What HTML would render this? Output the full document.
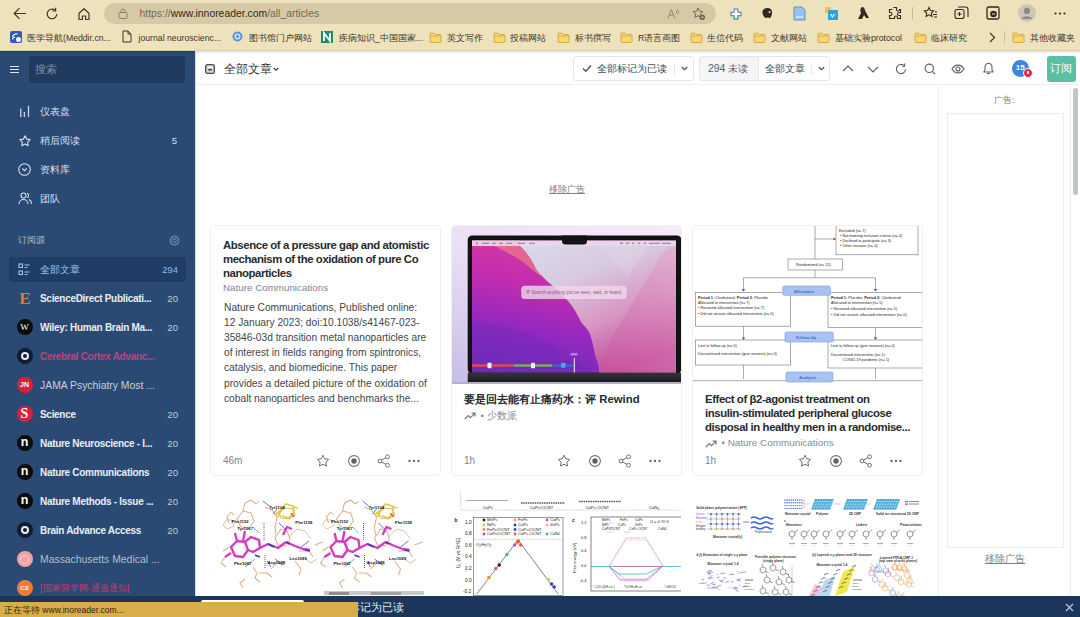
<!DOCTYPE html>
<html><head><meta charset="utf-8">
<style>
*{box-sizing:border-box;margin:0;padding:0}
html,body{width:1080px;height:617px;overflow:hidden;background:#fff;font-family:"Liberation Sans",sans-serif}
.a{position:absolute}
#chrome{left:0;top:0;width:1080px;height:51px;background:#eee2bc}
#addr{left:104px;top:3px;width:612px;height:21px;border-radius:11px;background:#d6c9a6}
.bm{position:absolute;top:32px;height:13px;font-size:8.7px;line-height:13px;color:#3a352a;white-space:nowrap}
.fold{position:absolute;top:32px;width:11px;height:10px;border:1px solid #c9a43c;background:#f6d978;border-radius:1.5px}
.fold:before{content:"";position:absolute;left:-1px;top:-3px;width:5px;height:3px;border:1px solid #c9a43c;border-bottom:none;background:#f6d978;border-radius:1px 1px 0 0}
#side{left:0;top:51px;width:195px;height:545px;background:#2a4a73}
.nav{position:absolute;left:40px;font-size:10px;color:#d6deea;white-space:nowrap;line-height:14px}
.feed{position:absolute;margin-top:0.8px;left:40px;font-size:10px;letter-spacing:-0.3px;color:#e8edf4;font-weight:700;white-space:nowrap;line-height:14px}
.cnt{position:absolute;margin-top:0.8px;right:17px;font-size:9.6px;color:#c3ccd9;line-height:14px}
.fi{position:absolute;left:18px;width:14px;height:14px;border-radius:50%}
#hdr{left:195px;top:51px;width:885px;height:34px;background:#fff;border-bottom:1px solid #eceef1}
.btn{position:absolute;top:56px;height:25px;border:1px solid #e3e6ea;border-radius:3px;background:#fff}
.card{position:absolute;width:231px;height:251px;border:1px solid #eef0f2;border-radius:4px;background:#fff;overflow:hidden}
.ttl{position:absolute;left:12px;font-size:11.4px;font-weight:700;color:#272a30;letter-spacing:-0.42px;line-height:14px}
.src{position:absolute;left:12px;font-size:9.4px;color:#7c8597;line-height:12px;white-space:nowrap}
.body{position:absolute;left:13px;top:74px;width:225px;font-size:10.22px;color:#43464c;line-height:15.2px;white-space:nowrap}
.foot{position:absolute;left:12px;top:229px;font-size:10px;line-height:12px;color:#7d8492}
.ic{position:absolute}
</style></head><body>
<!-- Browser chrome -->
<div id="chrome" class="a">
  <div class="a" style="left:0;top:50px;width:1080px;height:1px;background:#d9cda9"></div>
  <!-- back -->
  <svg class="a" style="left:13px;top:7px" width="14" height="13" viewBox="0 0 14 13"><path d="M13 6.5H1.5M6.5 1.2L1.2 6.5l5.3 5.3" fill="none" stroke="#3b362c" stroke-width="1.2"/></svg>
  <!-- refresh -->
  <svg class="a" style="left:45px;top:7px" width="14" height="14" viewBox="0 0 14 14"><path d="M11.8 7A4.8 4.8 0 1 1 10 3.2" fill="none" stroke="#3b362c" stroke-width="1.2"/><path d="M10.6 0.8v3.2H7.4" fill="none" stroke="#3b362c" stroke-width="1.2"/></svg>
  <!-- home -->
  <svg class="a" style="left:77px;top:7px" width="14" height="14" viewBox="0 0 14 14"><path d="M2 6.2L7 1.8l5 4.4V12.5H8.6V9H5.4v3.5H2z" fill="none" stroke="#3b362c" stroke-width="1.2" stroke-linejoin="round"/></svg>
  <div id="addr" class="a">
    <svg class="a" style="left:14px;top:5px" width="10" height="11" viewBox="0 0 10 11"><rect x="1" y="4.5" width="8" height="6" rx="1" fill="none" stroke="#8b836e" stroke-width="1"/><path d="M3 4.5V3a2 2 0 0 1 4 0v1.5" fill="none" stroke="#8b836e" stroke-width="1"/></svg>
    <div class="a" style="left:35.5px;top:4px;font-size:10.4px;line-height:14px;color:#6f6a5c;white-space:nowrap">https://<span style="color:#2d2a22">www.innoreader.com</span>/all_articles</div>
    <svg class="a" style="left:563px;top:5px" width="13" height="11" viewBox="0 0 13 11"><path d="M1 10.5L4.5 1.5 8 10.5M2.3 7h4.4" fill="none" stroke="#8b836e" stroke-width="0.9"/><path d="M9 2.5q1.5 1.5 0 3M10.5 1.2q2.5 2.8 0 5.6" fill="none" stroke="#8b836e" stroke-width="0.8"/></svg>
    <svg class="a" style="left:588px;top:4px" width="14" height="14" viewBox="0 0 14 14"><path d="M6 1l1.5 3.2 3.4.4-2.5 2.3.6 3.4L6 8.7 3 10.3l.6-3.4L1.1 4.6l3.4-.4z" fill="none" stroke="#6f6856" stroke-width="1"/><circle cx="10.3" cy="10.3" r="2.8" fill="#6f6856"/><path d="M10.3 9v2.6M9 10.3h2.6" stroke="#d6c9a6" stroke-width="0.7"/></svg>
  </div>
  <!-- extension icons -->
  <svg class="a" style="left:730px;top:8px" width="12" height="12" viewBox="0 0 12 12"><path d="M4.2 1h3.6v3.2H11v3.6H7.8V11H4.2V7.8H1V4.2h3.2z" fill="#fff" stroke="#4a7ad8" stroke-width="1.1"/><path d="M4.2 7.8V11h3.6V7.8H11" fill="none" stroke="#4bb58a" stroke-width="1.1"/></svg>
  <svg class="a" style="left:761px;top:7px" width="13" height="13" viewBox="0 0 13 13"><path d="M3 2c2-1.5 6-1.5 7.5 1 1 2 .5 5-.5 7-1 1.5-2.5 1.5-3 0-.5 1-2 1.5-3 .5C2 9 1 6 1.5 4z" fill="#2d2a22"/><circle cx="8.5" cy="5" r="1" fill="#f0e5c6"/></svg>
  <svg class="a" style="left:793px;top:6px" width="13" height="15" viewBox="0 0 13 15"><path d="M1 1h8l3 3v10H1z" fill="#9cc3f0" stroke="#5b95dc" stroke-width="1"/><path d="M3 11h7" stroke="#fff" stroke-width="1"/></svg>
  <svg class="a" style="left:824px;top:6px" width="15" height="15" viewBox="0 0 15 15"><rect x="1" y="1" width="6" height="6" fill="#f2c53d"/><rect x="4" y="4" width="10" height="10" rx="1" fill="#2ba1e8"/><path d="M6.5 8l2 3 2-3" stroke="#fff" stroke-width="1.2" fill="none"/></svg>
  <svg class="a" style="left:857px;top:6px" width="13" height="14" viewBox="0 0 13 14"><path d="M5 1c2 0 3 2 3 3.5L12 12H9l-2-3-2 4H1l3-6C3 5 3 2 5 1z" fill="#2d2a22"/></svg>
  <svg class="a" style="left:888px;top:6px" width="14" height="14" viewBox="0 0 14 14"><path d="M5.5 1.5h3v2a1.5 1.5 0 0 0 3 0h1v3h-1.5a1.5 1.5 0 0 0 0 3H12.5v3h-3v-1a1.5 1.5 0 0 0-3 0v1h-5v-3h1a1.5 1.5 0 0 0 0-3h-1v-3h3" fill="none" stroke="#2d2a22" stroke-width="1.1"/></svg>
  <div class="a" style="left:912px;top:7px;width:1px;height:13px;background:#c9bd9c"></div>
  <svg class="a" style="left:923px;top:6px" width="15" height="14" viewBox="0 0 15 14"><path d="M6 1.5l1.4 3 3.3.4-2.4 2.2.6 3.3L6 8.8 3.1 10.4l.6-3.3L1.3 4.9l3.3-.4z" fill="none" stroke="#2d2a22" stroke-width="1.1"/><path d="M10 8.5h4M11 11h3M12 6h2" stroke="#2d2a22" stroke-width="1.1"/></svg>
  <svg class="a" style="left:954px;top:6px" width="15" height="15" viewBox="0 0 15 15"><rect x="1" y="3.5" width="9" height="9" rx="2" fill="none" stroke="#2d2a22" stroke-width="1.1"/><path d="M4 1h7.5a2.5 2.5 0 0 1 2.5 2.5V11" fill="none" stroke="#2d2a22" stroke-width="1.1"/><path d="M5.5 6v4M3.5 8h4" stroke="#2d2a22" stroke-width="1.1"/></svg>
  <svg class="a" style="left:986px;top:6px" width="14" height="14" viewBox="0 0 14 14"><rect x="1" y="1" width="12" height="12" rx="1.5" fill="none" stroke="#2d2a22" stroke-width="1.3"/><circle cx="7.5" cy="8" r="3.3" fill="#2d2a22"/><path d="M6 8h3" stroke="#f0e5c6" stroke-width="1"/></svg>
  <svg class="a" style="left:1018px;top:4px" width="18" height="18" viewBox="0 0 18 18"><circle cx="9" cy="9" r="9" fill="#cdc6b8"/><circle cx="9" cy="7" r="3.2" fill="#8f8a80"/><path d="M3.5 15a6 4.5 0 0 1 11 0" fill="#8f8a80"/></svg>
  <svg class="a" style="left:1054px;top:12px" width="12" height="3" viewBox="0 0 12 3"><circle cx="1.5" cy="1.5" r="1.1" fill="#2d2a22"/><circle cx="6" cy="1.5" r="1.1" fill="#2d2a22"/><circle cx="10.5" cy="1.5" r="1.1" fill="#2d2a22"/></svg>
  <!-- bookmarks -->
  <svg class="a" style="left:10px;top:31px" width="12" height="12" viewBox="0 0 12 12"><rect width="12" height="12" rx="2" fill="#2d5bb8"/><path d="M2.5 6a4 4 0 0 1 5 -3" stroke="#fff" stroke-width="1.2" fill="none"/><path d="M2.5 8.5a2 2 0 0 1 2.5-2" stroke="#fff" stroke-width="1.2" fill="none"/><circle cx="8.5" cy="8.5" r="2.5" fill="#fff"/></svg>
  <div class="bm" style="left:27px">医学导航(Meddir.cn...</div>
  <svg class="a" style="left:122px;top:30px" width="10" height="13" viewBox="0 0 10 13"><path d="M1 1h5l3 3v8H1z" fill="none" stroke="#3a352a" stroke-width="1"/><path d="M6 1v3h3" fill="none" stroke="#3a352a" stroke-width="1"/></svg>
  <div class="bm" style="left:138.5px">journal neuroscienc...</div>
  <svg class="a" style="left:232px;top:31px" width="11" height="11" viewBox="0 0 11 11"><circle cx="5.5" cy="5.5" r="5" fill="#5b8fe0"/><circle cx="5.5" cy="5.5" r="3" fill="#d9e6fb"/><path d="M5.5 3.5l2 2-2 2-2-2z" fill="#5b8fe0"/></svg>
  <div class="bm" style="left:249px">图书馆门户网站</div>
  <svg class="a" style="left:321px;top:31px" width="12" height="12" viewBox="0 0 12 12"><rect width="12" height="12" fill="#1d8a6b"/><path d="M3 10V2l6 8V2" stroke="#fff" stroke-width="1.8" fill="none"/></svg>
  <div class="bm" style="left:339px">疾病知识_中国国家...</div>
  <svg class="a" style="left:429.0px;top:31.5px" width="13" height="11" viewBox="0 0 13 11"><path d="M1 2.2a1 1 0 0 1 1-1h3l1.3 1.3H11a1 1 0 0 1 1 1V9.5a1 1 0 0 1-1 1H2a1 1 0 0 1-1-1z" fill="#f7d672" stroke="#d0a63a" stroke-width="0.9"/><path d="M1 4h11" stroke="#d0a63a" stroke-width="0.7"/></svg><div class="bm" style="left:447px">英文写作</div>
  <svg class="a" style="left:493.0px;top:31.5px" width="13" height="11" viewBox="0 0 13 11"><path d="M1 2.2a1 1 0 0 1 1-1h3l1.3 1.3H11a1 1 0 0 1 1 1V9.5a1 1 0 0 1-1 1H2a1 1 0 0 1-1-1z" fill="#f7d672" stroke="#d0a63a" stroke-width="0.9"/><path d="M1 4h11" stroke="#d0a63a" stroke-width="0.7"/></svg><div class="bm" style="left:510px">投稿网站</div>
  <svg class="a" style="left:557.0px;top:31.5px" width="13" height="11" viewBox="0 0 13 11"><path d="M1 2.2a1 1 0 0 1 1-1h3l1.3 1.3H11a1 1 0 0 1 1 1V9.5a1 1 0 0 1-1 1H2a1 1 0 0 1-1-1z" fill="#f7d672" stroke="#d0a63a" stroke-width="0.9"/><path d="M1 4h11" stroke="#d0a63a" stroke-width="0.7"/></svg><div class="bm" style="left:574.5px">标书撰写</div>
  <svg class="a" style="left:620.0px;top:31.5px" width="13" height="11" viewBox="0 0 13 11"><path d="M1 2.2a1 1 0 0 1 1-1h3l1.3 1.3H11a1 1 0 0 1 1 1V9.5a1 1 0 0 1-1 1H2a1 1 0 0 1-1-1z" fill="#f7d672" stroke="#d0a63a" stroke-width="0.9"/><path d="M1 4h11" stroke="#d0a63a" stroke-width="0.7"/></svg><div class="bm" style="left:638px">R语言画图</div>
  <svg class="a" style="left:690.0px;top:31.5px" width="13" height="11" viewBox="0 0 13 11"><path d="M1 2.2a1 1 0 0 1 1-1h3l1.3 1.3H11a1 1 0 0 1 1 1V9.5a1 1 0 0 1-1 1H2a1 1 0 0 1-1-1z" fill="#f7d672" stroke="#d0a63a" stroke-width="0.9"/><path d="M1 4h11" stroke="#d0a63a" stroke-width="0.7"/></svg><div class="bm" style="left:707px">生信代码</div>
  <svg class="a" style="left:753.0px;top:31.5px" width="13" height="11" viewBox="0 0 13 11"><path d="M1 2.2a1 1 0 0 1 1-1h3l1.3 1.3H11a1 1 0 0 1 1 1V9.5a1 1 0 0 1-1 1H2a1 1 0 0 1-1-1z" fill="#f7d672" stroke="#d0a63a" stroke-width="0.9"/><path d="M1 4h11" stroke="#d0a63a" stroke-width="0.7"/></svg><div class="bm" style="left:770.5px">文献网站</div>
  <svg class="a" style="left:817.0px;top:31.5px" width="13" height="11" viewBox="0 0 13 11"><path d="M1 2.2a1 1 0 0 1 1-1h3l1.3 1.3H11a1 1 0 0 1 1 1V9.5a1 1 0 0 1-1 1H2a1 1 0 0 1-1-1z" fill="#f7d672" stroke="#d0a63a" stroke-width="0.9"/><path d="M1 4h11" stroke="#d0a63a" stroke-width="0.7"/></svg><div class="bm" style="left:835px">基础实验protocol</div>
  <svg class="a" style="left:914.0px;top:31.5px" width="13" height="11" viewBox="0 0 13 11"><path d="M1 2.2a1 1 0 0 1 1-1h3l1.3 1.3H11a1 1 0 0 1 1 1V9.5a1 1 0 0 1-1 1H2a1 1 0 0 1-1-1z" fill="#f7d672" stroke="#d0a63a" stroke-width="0.9"/><path d="M1 4h11" stroke="#d0a63a" stroke-width="0.7"/></svg><div class="bm" style="left:931px">临床研究</div>
  <svg class="a" style="left:989px;top:32px" width="7" height="11" viewBox="0 0 7 11"><path d="M1 1l4.5 4.5L1 10" fill="none" stroke="#3a352a" stroke-width="1.2"/></svg>
  <div class="a" style="left:1004px;top:31px;width:1px;height:13px;background:#cfc3a3"></div>
  <svg class="a" style="left:1012.0px;top:31.5px" width="13" height="11" viewBox="0 0 13 11"><path d="M1 2.2a1 1 0 0 1 1-1h3l1.3 1.3H11a1 1 0 0 1 1 1V9.5a1 1 0 0 1-1 1H2a1 1 0 0 1-1-1z" fill="#f7d672" stroke="#d0a63a" stroke-width="0.9"/><path d="M1 4h11" stroke="#d0a63a" stroke-width="0.7"/></svg><div class="bm" style="left:1029.5px">其他收藏夹</div>
</div>

<!-- Sidebar -->
<div id="side" class="a">
  <div class="a" style="left:10px;top:15px;width:9px;height:1.3px;background:#dfe6f0"></div>
  <div class="a" style="left:10px;top:18px;width:9px;height:1.3px;background:#dfe6f0"></div>
  <div class="a" style="left:10px;top:21px;width:9px;height:1.3px;background:#dfe6f0"></div>
  <div class="a" style="left:29px;top:5px;width:156px;height:27px;border-radius:3px;background:#1f395f"></div>
  <div class="a" style="left:34.5px;top:11px;font-size:11px;line-height:15px;color:#8090a8">搜索</div>
  <!-- nav -->
  <svg class="a" style="left:19px;top:54px" width="12" height="12" viewBox="0 0 12 12"><path d="M1.8 3.6V12M5.4 7V12M9.5 0.7V12" stroke="#c9d6e8" stroke-width="1.3"/></svg>
  <div class="nav" style="top:53.5px">仪表盘</div>
  <svg class="a" style="left:18.5px;top:83.5px" width="12" height="12" viewBox="0 0 12 12"><path d="M6 0.8l1.6 3.3 3.6.5-2.6 2.5.6 3.6L6 9l-3.2 1.7.6-3.6L0.8 4.6l3.6-.5z" fill="none" stroke="#d6deea" stroke-width="1.1" stroke-linejoin="round"/></svg>
  <div class="nav" style="top:83px">稍后阅读</div>
  <div class="a" style="right:18px;top:83px;font-size:9.5px;line-height:14px;color:#d6deea">5</div>
  <svg class="a" style="left:18px;top:112px" width="13" height="13" viewBox="0 0 13 13"><circle cx="6.5" cy="6.5" r="5.8" fill="none" stroke="#d6deea" stroke-width="1.1"/><path d="M4.3 5.5l2.2 2.2 2.2-2.2" fill="none" stroke="#d6deea" stroke-width="1.1"/></svg>
  <div class="nav" style="top:111.5px">资料库</div>
  <svg class="a" style="left:18px;top:141px" width="14" height="13" viewBox="0 0 14 13"><circle cx="5.5" cy="3.5" r="2.5" fill="none" stroke="#d6deea" stroke-width="1.1"/><path d="M1 12a4.5 4.5 0 0 1 9 0" fill="none" stroke="#d6deea" stroke-width="1.1"/><path d="M9 1.2a2.4 2.4 0 0 1 0 4.6M11 7.5a4 4 0 0 1 2.2 4.5" fill="none" stroke="#d6deea" stroke-width="1.1"/></svg>
  <div class="nav" style="top:141px">团队</div>
  <!-- feeds header -->
  <div class="a" style="left:17.5px;top:183px;font-size:9px;line-height:13px;color:#b0bccd">订阅源</div>
  <svg class="a" style="left:169px;top:184px" width="11" height="11" viewBox="0 0 11 11"><circle cx="5.5" cy="5.5" r="1.8" fill="none" stroke="#8fa0b8" stroke-width="0.9"/><path d="M5.5 0.7l1 1.2 1.5-.3.4 1.5 1.4.6-.5 1.4.9 1.2-1.2.9.1 1.5-1.5.2-.7 1.3-1.4-.6-1.4.6-.7-1.3-1.5-.2.1-1.5-1.2-.9.9-1.2-.5-1.4 1.4-.6.4-1.5 1.5.3z" fill="none" stroke="#8fa0b8" stroke-width="0.9" stroke-linejoin="round"/></svg>
  <div class="a" style="left:9px;top:206px;width:177px;height:25px;border-radius:3px;background:#203d66"></div>
  <svg class="a" style="left:18px;top:212px" width="12" height="13" viewBox="0 0 12 13"><rect x="1" y="1" width="3.5" height="3.5" fill="none" stroke="#9ec1f0" stroke-width="1.1"/><rect x="1" y="8" width="3.5" height="3.5" fill="none" stroke="#9ec1f0" stroke-width="1.1"/><path d="M6.5 2h5M6.5 4.5h3M6.5 9h5M6.5 11.5h3" stroke="#9ec1f0" stroke-width="1.1"/></svg>
  <div class="nav" style="top:211.5px;color:#9fc2f0;font-size:10.4px">全部文章</div>
  <div class="cnt" style="top:211.5px;color:#93b9ee;font-size:9.4px">294</div>
  <!-- feeds -->
  <div class="a" style="left:18px;top:240px;width:14px;height:15px;font-family:'Liberation Serif';font-size:17px;line-height:15px;color:#e07a3a;font-weight:700;text-align:center">E</div>
  <div class="feed" style="top:240.5px">ScienceDirect Publicati...</div><div class="cnt" style="top:240.5px">20</div>
  <div class="fi" style="top:268.0px;left:16.5px;width:16px;height:16px;background:#0b0b0b;color:#fff;font-family:'Liberation Serif';font-size:9px;line-height:16px;text-align:center">W</div>
  <div class="feed" style="top:269px">Wiley: Human Brain Ma...</div><div class="cnt" style="top:269px">20</div>
  <div class="fi" style="top:297.0px;left:16.5px;width:16px;height:16px;background:#0f1c33"><div class="a" style="left:4px;top:4px;width:8px;height:8px;border-radius:50%;border:2px solid #e9eef5"></div></div>
  <div class="feed" style="top:298px;color:#b3497c">Cerebral Cortex Advanc...</div>
  <div class="fi" style="top:326.0px;left:16.5px;width:16px;height:16px;background:#d8213a;color:#fff;font-size:7px;font-weight:700;line-height:16px;text-align:center">JN</div>
  <div class="feed" style="top:327px;font-weight:400;letter-spacing:0;font-size:10.4px;color:#c6cfdc">JAMA Psychiatry Most ...</div>
  <div class="fi" style="top:355.0px;left:16.5px;width:16px;height:16px;background:#d8213a;color:#fff;font-family:'Liberation Serif';font-size:14px;font-weight:700;line-height:16px;text-align:center">S</div>
  <div class="feed" style="top:356px">Science</div><div class="cnt" style="top:356px">20</div>
  <div class="fi" style="top:384.0px;left:16.5px;width:16px;height:16px;background:#0b0b0b;color:#fff;font-size:12.5px;font-weight:700;line-height:15px;text-align:center">n</div>
  <div class="feed" style="top:385px">Nature Neuroscience - I...</div><div class="cnt" style="top:385px">20</div>
  <div class="fi" style="top:413.0px;left:16.5px;width:16px;height:16px;background:#0b0b0b;color:#fff;font-size:12.5px;font-weight:700;line-height:15px;text-align:center">n</div>
  <div class="feed" style="top:414px">Nature Communications</div><div class="cnt" style="top:414px">20</div>
  <div class="fi" style="top:442.0px;left:16.5px;width:16px;height:16px;background:#0b0b0b;color:#fff;font-size:12.5px;font-weight:700;line-height:15px;text-align:center">n</div>
  <div class="feed" style="top:443px">Nature Methods - Issue ...</div><div class="cnt" style="top:443px">20</div>
  <div class="fi" style="top:471.0px;left:16.5px;width:16px;height:16px;background:#0f1c33"><div class="a" style="left:4px;top:4px;width:8px;height:8px;border-radius:50%;border:2px solid #e9eef5"></div></div>
  <div class="feed" style="top:472px">Brain Advance Access</div><div class="cnt" style="top:472px">20</div>
  <div class="fi" style="top:500.0px;left:16.5px;width:16px;height:16px;background:#f0a3a3"><div class="a" style="left:3.5px;top:3.5px;width:9px;height:9px;border-radius:50%;border:1px dotted #fff"></div></div>
  <div class="feed" style="top:501px;font-weight:400;letter-spacing:0;font-size:10.4px;color:#b3bdcc">Massachusetts Medical ...</div>
  <div class="fi" style="top:529.0px;left:16.5px;width:16px;height:16px;background:#f07a3c;color:#fff;font-size:6px;font-weight:700;line-height:16px;text-align:center">CS</div>
  <div class="feed" style="top:529.5px;font-weight:400;letter-spacing:0;font-size:9.3px;color:#c23d6e">[国家留学网-通选通知]</div>
</div>

<!-- Header -->
<div id="hdr" class="a">
  <svg class="a" style="left:10px;top:13px" width="10" height="10" viewBox="0 0 10 10"><rect x="0.7" y="0.7" width="8.6" height="8.6" rx="1.6" fill="#d4d5d8" stroke="#4a4e55" stroke-width="1.3"/><path d="M3 2.6h4v1.3H3z" fill="#fff"/><ellipse cx="5" cy="5.8" rx="2" ry="1" fill="#4a4e55"/></svg>
  <div class="a" style="left:29px;top:10px;font-size:11.5px;line-height:16px;color:#2b2e34">全部文章</div>
  <svg class="a" style="left:77.5px;top:16px" width="6" height="5" viewBox="0 0 6 5"><path d="M0.7 1l2.3 2.3L5.3 1" fill="none" stroke="#2b2e34" stroke-width="1.1"/></svg>
</div>
<!-- mark all read -->
<div class="btn" style="left:573px;width:121px">
  <svg class="a" style="left:8px;top:7px" width="10" height="9" viewBox="0 0 10 9"><path d="M1 4.5l2.8 2.8L9 1.5" fill="none" stroke="#4b5058" stroke-width="1.3"/></svg>
  <div class="a" style="left:23px;top:4px;font-size:10px;line-height:15px;color:#44484f;white-space:nowrap">全部标记为已读</div>
  <div class="a" style="left:100px;top:8px;width:1px;height:9px;background:#e1e4e8"></div>
  <svg class="a" style="left:107px;top:9px" width="7" height="5" viewBox="0 0 7 5"><path d="M0.8 1l2.7 2.7L6.2 1" fill="none" stroke="#4b5058" stroke-width="1.2"/></svg>
</div>
<div class="btn" style="left:698.5px;width:131px;overflow:hidden">
  <div class="a" style="left:0;top:0;width:59px;height:23px;background:#f4f5f7;border-right:1px solid #e6e8eb"></div>
  <div class="a" style="left:8.5px;top:4px;font-size:10.4px;line-height:15px;color:#5a5f67;white-space:nowrap">294 未读</div>
  <div class="a" style="left:65.5px;top:4px;font-size:10px;line-height:15px;color:#44484f;white-space:nowrap">全部文章</div>
  <div class="a" style="left:111px;top:8px;width:1px;height:9px;background:#e1e4e8"></div>
  <svg class="a" style="left:118px;top:9px" width="7" height="5" viewBox="0 0 7 5"><path d="M0.8 1l2.7 2.7L6.2 1" fill="none" stroke="#4b5058" stroke-width="1.2"/></svg>
</div>
<svg class="a" style="left:842px;top:65px" width="12" height="7" viewBox="0 0 12 7"><path d="M1 6l5-5 5 5" fill="none" stroke="#5c6169" stroke-width="1.15"/></svg>
<svg class="a" style="left:867px;top:66px" width="12" height="7" viewBox="0 0 12 7"><path d="M1 1l5 5 5-5" fill="none" stroke="#5c6169" stroke-width="1.15"/></svg>
<svg class="a" style="left:895px;top:63px" width="12" height="12" viewBox="0 0 12 12"><path d="M10.6 6.3A4.6 4.6 0 1 1 8.7 2.3" fill="none" stroke="#5c6169" stroke-width="1.1"/><path d="M9.6 0.6v2.7H6.9" fill="none" stroke="#5c6169" stroke-width="1.1"/></svg>
<svg class="a" style="left:924px;top:63px" width="12" height="12" viewBox="0 0 12 12"><circle cx="5.3" cy="5.3" r="4.2" fill="none" stroke="#5c6169" stroke-width="1.15"/><path d="M8.4 8.4l2.8 2.8" stroke="#5c6169" stroke-width="1.15"/></svg>
<svg class="a" style="left:951px;top:64px" width="14" height="10" viewBox="0 0 14 10"><path d="M1 5c3-5.2 9-5.2 12 0-3 5.2-9 5.2-12 0z" fill="none" stroke="#5c6169" stroke-width="1.1"/><circle cx="7" cy="5" r="2" fill="none" stroke="#5c6169" stroke-width="1.1"/></svg>
<svg class="a" style="left:982.5px;top:62px" width="11" height="13" viewBox="0 0 11 13"><path d="M5.5 1.3a3.5 3.5 0 0 1 3.5 3.5v3.5l1.2 1.6H0.8L2 8.3V4.8a3.5 3.5 0 0 1 3.5-3.5z" fill="none" stroke="#5c6169" stroke-width="1.05" stroke-linejoin="round"/><path d="M4 11.5h3" stroke="#5c6169" stroke-width="1.1"/></svg>
<div class="a" style="left:1012px;top:60px;width:16.5px;height:16.5px;border-radius:50%;background:#3d86e0;color:#fff;font-size:8px;line-height:16px;text-align:center;font-weight:700">15</div>
<div class="a" style="left:1023px;top:67.5px;width:10px;height:10px;border-radius:50%;background:#e52940;border:1px solid #fff"><div class="a" style="left:2.8px;top:2.8px;width:2.5px;height:2.5px;border-radius:50%;background:#fff"></div></div>
<div class="a" style="left:1046.5px;top:56px;width:29.5px;height:25.5px;border-radius:3px;background:#5bbfa6;color:#fff;font-size:10.5px;line-height:25px;text-align:center">订阅</div>

<div class="a" style="left:549px;top:182px;font-size:9.3px;line-height:14px;color:#7a7f88;text-decoration:underline">移除广告</div>
<!-- card 1 -->
<div class="card" style="left:210px;top:225px">
  <div class="ttl" style="top:12px">Absence of a pressure gap and atomistic<br>mechanism of the oxidation of pure Co<br>nanoparticles</div>
  <div class="src" style="top:56px;font-size:9.8px">Nature Communications</div>
  <div class="body" style="top:73.6px">Nature Communications, Published online:<br>12 January 2023; doi:10.1038/s41467-023-<br>35846-03d transition metal nanoparticles are<br>of interest in fields ranging from spintronics,<br>catalysis, and biomedicine. This paper<br>provides a detailed picture of the oxidation of<br>cobalt nanoparticles and benchmarks the...</div>
  <div class="foot" style="top:229px">46m</div>
  <svg class="a" style="left:104.7px;top:228px" width="14" height="14" viewBox="0 0 14 14"><path d="M7 1.2l1.75 3.6 3.95.55-2.85 2.8.7 3.9L7 10.2l-3.55 1.85.7-3.9-2.85-2.8 3.95-.55z" fill="none" stroke="#6a6f77" stroke-width="1" stroke-linejoin="round"/></svg>
  <svg class="a" style="left:135.5px;top:228px" width="14" height="14" viewBox="0 0 14 14"><circle cx="7" cy="7" r="5.4" fill="none" stroke="#6a6f77" stroke-width="1.1"/><circle cx="7" cy="7" r="2.7" fill="#5e636b"/></svg>
  <svg class="a" style="left:166px;top:228px" width="14" height="14" viewBox="0 0 14 14"><circle cx="10.5" cy="2.8" r="1.9" fill="none" stroke="#6a6f77" stroke-width="1"/><circle cx="3" cy="7" r="1.9" fill="none" stroke="#6a6f77" stroke-width="1"/><circle cx="10.5" cy="11.2" r="1.9" fill="none" stroke="#6a6f77" stroke-width="1"/><path d="M4.7 6l4.1-2.3M4.7 8l4.1 2.3" stroke="#6a6f77" stroke-width="1"/></svg>
  <svg class="a" style="left:196px;top:228px" width="14" height="14" viewBox="0 0 14 14"><circle cx="2.5" cy="7" r="1.15" fill="#5e636b"/><circle cx="7" cy="7" r="1.15" fill="#5e636b"/><circle cx="11.5" cy="7" r="1.15" fill="#5e636b"/></svg>
</div>
<!-- card 2 -->
<div class="card" style="left:451px;top:225px">
  <svg id="img2" class="a" style="left:0;top:0" width="231" height="158" viewBox="0 0 231 158">
  <defs>
    <linearGradient id="bg2" x1="1" y1="0" x2="0" y2="1"><stop offset="0" stop-color="#f6ecf8"/><stop offset="0.55" stop-color="#ebe0f4"/><stop offset="1" stop-color="#c6bde6"/></linearGradient>
    <linearGradient id="scrL" x1="0.4" y1="0" x2="0.1" y2="1"><stop offset="0" stop-color="#d83aa4"/><stop offset="0.35" stop-color="#c02cb0"/><stop offset="0.65" stop-color="#9428c0"/><stop offset="1" stop-color="#6e2cb6"/></linearGradient>
    <linearGradient id="scrR" x1="0.1" y1="0" x2="0.6" y2="1"><stop offset="0" stop-color="#d9d7ea"/><stop offset="0.3" stop-color="#d8cade"/><stop offset="0.65" stop-color="#d894c2"/><stop offset="1" stop-color="#c0489a"/></linearGradient>
    <linearGradient id="ridge" x1="1" y1="0" x2="0" y2="1"><stop offset="0" stop-color="#e6a8cc"/><stop offset="1" stop-color="#c8529e"/></linearGradient>
    <linearGradient id="base2" x1="0" y1="0" x2="0" y2="1"><stop offset="0" stop-color="#333338"/><stop offset="1" stop-color="#1c1c20"/></linearGradient>
  </defs>
  <rect width="231" height="158" fill="url(#bg2)"/>
  <rect x="15.7" y="9.5" width="213.8" height="138" rx="4.5" fill="#121214"/>
  <rect x="20" y="14.5" width="204" height="132.2" fill="url(#scrL)"/>
  <path d="M20 95 C60 100 100 110 140 146.7 L20 146.7z" fill="#6a2ab8" opacity="0.35"/>
  <path d="M42.3 20 L68 20 C72 25 75 28 77 30.5 C80 36 82 41 84 43 L89 49 L89 50.3 C80 44 76 40 71.5 36.3 C64 31 58 28 54 25.8z" fill="#e2688e"/>
  <path d="M68 20 L224 20 L224 146.7 L148 146.7 C146 138 145 134 143 129 C141 118 139 110 137 106 C134 101 131 99 129 96 C126 90 124 86 122 83 C119 78 117 76 115 74 L101 60 C99 58 97 57 96 56 C93 53 91 51 89 49 C86 46 85 44 84 43 C82 39 80 35 77 30.5 C74 26 71 23 68 20z" fill="url(#scrR)"/>
  <path d="M212 26 L224 20 L224 146.7 L146 146.7 C150 130 160 110 170 95 C185 70 200 45 212 26z" fill="url(#ridge)" opacity="0.55"/>
  <path d="M150 20 L175 52 L196 20z" fill="#e8e0ee" opacity="0.25"/>
  <rect x="20" y="14.5" width="204" height="5.5" fill="#e6d8e8"/>
  <path d="M20 14.5h48v5.5h-48z" fill="#eac8dc" opacity="0.6"/>
  <g fill="#6a5a6a" opacity="0.55"><rect x="24" y="16.4" width="2" height="2"/><rect x="30" y="16.7" width="7" height="1.3"/><rect x="40" y="16.7" width="4" height="1.3"/><rect x="47" y="16.7" width="4" height="1.3"/><rect x="54" y="16.7" width="6" height="1.3"/><rect x="66" y="16.7" width="7" height="1.3"/><rect x="77" y="16.7" width="6" height="1.3"/>
  <rect x="168" y="16.5" width="3" height="1.6"/><rect x="174" y="16.5" width="3" height="1.6"/><rect x="180" y="16.5" width="2" height="1.6"/><rect x="186" y="16.5" width="2" height="1.6"/><rect x="192" y="16.5" width="2" height="1.6"/><rect x="197" y="16.7" width="11" height="1.3"/><rect x="210" y="16.7" width="9" height="1.3"/></g>
  <path d="M110 9.5 h25 v5.5 a3.5 3.5 0 0 1 -3.5 3.5 h-18 a3.5 3.5 0 0 1 -3.5 -3.5z" fill="#121214"/>
  <rect x="69.2" y="59.7" width="105.4" height="13.3" rx="3.5" fill="#f2d6ea" opacity="0.82"/>
  <circle cx="76" cy="65.6" r="1.3" fill="none" stroke="#6a5070" stroke-width="0.6"/>
  <text x="79.5" y="68" font-family="Liberation Sans" font-size="4.6" fill="#6a5070" opacity="0.85">Search anything you've seen, said, or heard</text>
  <rect x="20" y="138.3" width="41" height="2.4" fill="#e8464a"/>
  <rect x="61.5" y="138.3" width="39" height="2.4" fill="#72b84e"/>
  <rect x="101.5" y="138.3" width="20.5" height="2.4" fill="#2f68c8"/>
  <rect x="35.5" y="136.8" width="4" height="5.4" rx="0.6" fill="#f6f2f2"/>
  <rect x="79" y="136.8" width="4" height="5.4" rx="0.6" fill="#e8eee8"/>
  <rect x="109" y="137" width="4.5" height="4.8" rx="0.6" fill="#4fa0f2"/>
  <rect x="121.8" y="132" width="1" height="14.7" fill="#f4eef6"/>
  <rect x="118.5" y="127" width="7" height="2.6" rx="0.8" fill="#e8d8f0" opacity="0.5"/>
  <rect x="15.7" y="146.7" width="213.8" height="9.3" fill="url(#base2)"/>
  <rect x="0" y="156" width="231" height="2" fill="#aeb2c8"/>
</svg>
  <div class="ttl" style="top:166px;letter-spacing:0">要是回去能有止痛药水：评 Rewind</div>
  <svg class="a" style="left:12px;top:186px" width="12" height="8" viewBox="0 0 12 8"><path d="M0.8 7l3.5-3.5 2.2 2.2L10.8 1.4M7.6 1.2h3.4v3.4" fill="none" stroke="#6f7786" stroke-width="1.2"/></svg>
  <div class="src" style="top:184px;left:28.5px;font-size:9.9px;color:#858c9a">• 少数派</div>
  <div class="foot" style="top:229px">1h</div>
  <svg class="a" style="left:104.7px;top:228px" width="14" height="14" viewBox="0 0 14 14"><path d="M7 1.2l1.75 3.6 3.95.55-2.85 2.8.7 3.9L7 10.2l-3.55 1.85.7-3.9-2.85-2.8 3.95-.55z" fill="none" stroke="#6a6f77" stroke-width="1" stroke-linejoin="round"/></svg>
  <svg class="a" style="left:135.5px;top:228px" width="14" height="14" viewBox="0 0 14 14"><circle cx="7" cy="7" r="5.4" fill="none" stroke="#6a6f77" stroke-width="1.1"/><circle cx="7" cy="7" r="2.7" fill="#5e636b"/></svg>
  <svg class="a" style="left:166px;top:228px" width="14" height="14" viewBox="0 0 14 14"><circle cx="10.5" cy="2.8" r="1.9" fill="none" stroke="#6a6f77" stroke-width="1"/><circle cx="3" cy="7" r="1.9" fill="none" stroke="#6a6f77" stroke-width="1"/><circle cx="10.5" cy="11.2" r="1.9" fill="none" stroke="#6a6f77" stroke-width="1"/><path d="M4.7 6l4.1-2.3M4.7 8l4.1 2.3" stroke="#6a6f77" stroke-width="1"/></svg>
  <svg class="a" style="left:196px;top:228px" width="14" height="14" viewBox="0 0 14 14"><circle cx="2.5" cy="7" r="1.15" fill="#5e636b"/><circle cx="7" cy="7" r="1.15" fill="#5e636b"/><circle cx="11.5" cy="7" r="1.15" fill="#5e636b"/></svg>
</div>
<!-- card 3 -->
<div class="card" style="left:692px;top:225px">
  <svg id="img3" class="a" style="left:0;top:0" width="231" height="158" viewBox="0 0 231 158">
  <rect width="231" height="158" fill="#fff"/>
  <g fill="#fff" stroke="#727272" stroke-width="0.6">
    <path fill="none" d="M122 0V51.8M122 13H142M50.5 51.8H182.5M50.5 51.8V65M182.5 51.8V65M50.5 100.2V113M182.5 101.4V113M50.5 139V153M182.5 142V153M0 154.7H231"/>
    <rect x="143" y="-1" width="82" height="29.8"/>
    <rect x="95" y="33" width="54.6" height="11"/>
    <rect x="2.4" y="66.4" width="95.3" height="33.8"/>
    <rect x="135" y="66.4" width="95" height="35"/>
    <rect x="2.4" y="114" width="95.3" height="25"/>
    <rect x="135" y="114" width="95" height="28"/>
  </g>
  <g fill="#a8c2f2" stroke="#7b9be0" stroke-width="0.6">
    <rect x="89.8" y="60" width="47.6" height="9.3" rx="1.5"/>
    <rect x="92" y="106" width="48.3" height="10" rx="1.5"/>
    <rect x="93" y="146" width="47" height="10" rx="1.5"/>
  </g>
  <g fill="#4a6cc0" font-family="Liberation Sans" font-size="4.2" font-weight="700">
    <text x="101" y="66.5">Allocation</text><text x="103" y="112.8">Follow-Up</text><text x="106" y="152.8">Analysis</text>
  </g>
  <g fill="#1e1e1e" font-family="Liberation Sans" font-size="3.8">
    <text x="146" y="5.5">Excluded (n= 7)</text>
    <text x="147" y="10.5">• Not meeting inclusion criteria (n= 4)</text>
    <text x="147" y="15.5">• Declined to participate (n= 3)</text>
    <text x="147" y="20.5">• Other reasons (n= 0)</text>
    <text x="103" y="40">Randomized (n= 12)</text>
    <text x="5" y="72.5"><tspan font-weight="700">Period 1:</tspan> Clenbuterol, <tspan font-weight="700">Period 2:</tspan> Placebo</text>
    <text x="5" y="77.5">Allocated to intervention (n= 7)</text>
    <text x="5" y="83">• Received allocated intervention (n= 7)</text>
    <text x="5" y="89">• Did not receive allocated intervention (n= 0)</text>
    <text x="138" y="73"><tspan font-weight="700">Period 1:</tspan> Placebo, <tspan font-weight="700">Period 2:</tspan> Clenbuterol</text>
    <text x="138" y="78">Allocated to intervention (n= 5)</text>
    <text x="138" y="83.5">• Received allocated intervention (n= 5)</text>
    <text x="138" y="89.5">• Did not receive allocated intervention (n= 0)</text>
    <text x="5" y="120.5">Lost to follow-up (n= 0)</text>
    <text x="5" y="129">Discontinued intervention (give reasons) (n= 0)</text>
    <text x="138" y="121">Lost to follow-up (give reasons) (n= 0)</text>
    <text x="138" y="129.5">Discontinued intervention (n= 1):</text>
    <text x="150" y="134.5">COVID-19 pandemic (n= 1)</text>
  </g>
  <g fill="#555"><path d="M48.8 63l1.7 2.5 1.7-2.5zM180.8 63l1.7 2.5 1.7-2.5zM48.8 111.5l1.7 2.5 1.7-2.5zM180.8 111.5l1.7 2.5 1.7-2.5zM140.5 11.5l2.5 1.5-2.5 1.5z"/></g>
</svg>
  <div class="ttl" style="top:166px">Effect of β2-agonist treatment on<br>insulin-stimulated peripheral glucose<br>disposal in healthy men in a randomise...</div>
  <svg class="a" style="left:12px;top:213.5px" width="12" height="8" viewBox="0 0 12 8"><path d="M0.8 7l3.5-3.5 2.2 2.2L10.8 1.4M7.6 1.2h3.4v3.4" fill="none" stroke="#6f7786" stroke-width="1.2"/></svg>
  <div class="src" style="top:211px;left:28.5px;font-size:9.9px;color:#858c9a">• Nature Communications</div>
  <div class="foot" style="top:229px">1h</div>
  <svg class="a" style="left:104.7px;top:228px" width="14" height="14" viewBox="0 0 14 14"><path d="M7 1.2l1.75 3.6 3.95.55-2.85 2.8.7 3.9L7 10.2l-3.55 1.85.7-3.9-2.85-2.8 3.95-.55z" fill="none" stroke="#6a6f77" stroke-width="1" stroke-linejoin="round"/></svg>
  <svg class="a" style="left:135.5px;top:228px" width="14" height="14" viewBox="0 0 14 14"><circle cx="7" cy="7" r="5.4" fill="none" stroke="#6a6f77" stroke-width="1.1"/><circle cx="7" cy="7" r="2.7" fill="#5e636b"/></svg>
  <svg class="a" style="left:166px;top:228px" width="14" height="14" viewBox="0 0 14 14"><circle cx="10.5" cy="2.8" r="1.9" fill="none" stroke="#6a6f77" stroke-width="1"/><circle cx="3" cy="7" r="1.9" fill="none" stroke="#6a6f77" stroke-width="1"/><circle cx="10.5" cy="11.2" r="1.9" fill="none" stroke="#6a6f77" stroke-width="1"/><path d="M4.7 6l4.1-2.3M4.7 8l4.1 2.3" stroke="#6a6f77" stroke-width="1"/></svg>
  <svg class="a" style="left:196px;top:228px" width="14" height="14" viewBox="0 0 14 14"><circle cx="2.5" cy="7" r="1.15" fill="#5e636b"/><circle cx="7" cy="7" r="1.15" fill="#5e636b"/><circle cx="11.5" cy="7" r="1.15" fill="#5e636b"/></svg>
</div>
<!-- row 2 -->
<div class="card" style="left:210px;top:478px;height:150px;border-color:transparent">
  <svg id="img4" class="a" style="left:0;top:9px" width="231" height="140" viewBox="0 0 231 140">
  <rect width="231" height="140" fill="#fff"/>
  <defs>
    <g id="mol">
      <g fill="none" stroke="#e0b088" stroke-width="1.05" stroke-linejoin="round">
        <path d="M22 30l6-8 8 2 3 8-5 7-8-1z"/>
        <path d="M14 34l-2-6 4-5 3 3M28 22l2-8 6-3M36 11l5 4 3-3"/>
        <path d="M50 18l7 3 5 7-2 10 1 8"/>
        <path d="M64 24l6-5 8 1 2 6-6 4-8-1z"/>
        <path d="M66 40l6 2 3 8-4 7-8-1-3-7z"/>
        <path d="M8 62l6-4M10 68l-4 6 5 4M38 78l4 6-2 5 5 4M44 84l8 0 5 4M56 80l6-6 8 2M30 90l-5 4 3 5M84 62l10 0 4 6M80 72l6 8-2 6M100 56l8-3"/>
        <path d="M12 40l-4-4 3-5 6 0 2 6z" stroke-width="0.8"/>
        <path d="M74 48l8-8 8 2 6 8M90 70l6 4 6-4" stroke-width="0.8"/>
      </g>
      <g fill="none" stroke="#5866c8" stroke-width="0.9"><path d="M48 12l6 5M62 20l-4 5M70 40l-6-6M52 72l4 6M86 58l8-6M60 70l8 6"/></g>
      <g fill="none" stroke="#e2cc3a" stroke-width="1.8" stroke-linejoin="round"><path d="M60 26l6-5 5-6 7 2 1 7-5 5-7-2M79 18l4 1M66 21l-3 7"/></g><g stroke="#d84a3a" stroke-width="1.2"><path d="M76 24l3 4"/></g>
      <g fill="none" stroke="#d63cc2" stroke-width="2.4" stroke-linejoin="round">
        <path d="M16 58l6-6 8 1 3 8-5 7-8-1z"/>
        <path d="M30 53l6-5 8 3 1 8-7 4-5-2"/>
        <path d="M45 59l8-4 10 4 8-6M71 53l9 4 8 3 7 1"/>
        <path d="M22 52l-2-8M28 52l2-10M16 64l-6 4M68 46l4-8 5 2"/>
      </g>
      <g fill="none" stroke="#3c3cb4" stroke-width="1.6"><path d="M53 55l6 3M71 53l4 2M90 61l5 1M40 66l5 2"/></g>
      <g stroke="#333" stroke-width="0.8" stroke-dasharray="1 1"><path d="M49 34V52M50 66V80"/></g>
      <g stroke="#2a7a7a" stroke-width="0.6"><path d="M38 38l6 6M40 70l-10 8"/></g>
      <g fill="#1a1a1a" font-family="Liberation Sans" font-size="4.3" font-weight="700">
        <text x="54" y="20">Tyr1104</text><text x="16.5" y="34">Phe1152</text><text x="80.3" y="35">Phe1158</text>
        <text x="22.2" y="40.5">Tyr1067</text><text x="19" y="75.7">Phe1087</text><text x="52.5" y="75">Asp1088</text><text x="74.6" y="70.8">Leu1089</text>
      </g>
    </g>
  </defs>
  <use href="#mol" x="4" y="1"/>
  <use href="#mol" x="103.5" y="1"/>
  <rect x="113" y="103" width="100" height="4" fill="#9a9a9a" opacity="0.55"/>
  <rect x="118" y="104" width="20" height="3" fill="#555" opacity="0.5"/>
  <rect x="160" y="104" width="30" height="3" fill="#666" opacity="0.4"/>
</svg>
</div>
<div class="card" style="left:451px;top:478px;height:150px;border-color:transparent">
  <svg id="img5" class="a" style="left:0;top:9px" width="231" height="140" viewBox="0 0 231 140">
  <rect width="231" height="140" fill="#fff"/>
  <path d="M8.7 4V22H230" fill="none" stroke="#999" stroke-width="0.5" stroke-dasharray="1 0.8"/>
  <g stroke="#777" stroke-width="0.6"><path d="M14 12.5h42"/></g>
  <g stroke="#555" stroke-width="1.4" stroke-dasharray="1.5 0.8"><path d="M69 15h44M127 13.5h42"/></g>
  <g fill="#222" font-family="Liberation Sans" font-size="4.2">
    <text x="31" y="20.5">CoPc</text><text x="78" y="20.5">CoPc/OCNT</text><text x="133.5" y="20.5">CoPc-OCNT</text><text x="197" y="20.5">CoN<tspan font-size="3" dy="1">4</tspan></text>
  </g>
  <!-- panel b -->
  <text x="2.5" y="34" font-family="Liberation Sans" font-size="4.8" font-weight="700" fill="#111">b</text>
  <rect x="21.5" y="29.5" width="89.5" height="78" fill="none" stroke="#555" stroke-width="0.6"/>
  <g fill="#222" font-family="Liberation Sans" font-size="4">
    <g font-size="4.8"><text x="13" y="35.6">1.0</text><text x="13" y="47.2">0.8</text><text x="13" y="58.8">0.6</text><text x="13" y="70.4">0.4</text><text x="13" y="82">0.2</text><text x="13" y="93.6">0.0</text><text x="11" y="105.2">-0.2</text></g>
    <text transform="translate(8,80) rotate(-90)" font-size="4.8">U<tspan font-size="3" dy="1">L</tspan><tspan dy="-1"> (V vs RHE)</tspan></text>
    <text x="24" y="58">O<tspan font-size="3" dy="1">2</tspan><tspan dy="-1">/H</tspan><tspan font-size="3" dy="1">2</tspan><tspan dy="-1">O</tspan><tspan font-size="3" dy="1">2</tspan></text>
  </g>
  <g font-family="Liberation Sans" font-size="4.2" fill="#222">
    <circle cx="32" cy="32" r="1.4" fill="#222"/><text x="35" y="33.3">MnPc</text>
    <circle cx="32" cy="37" r="1.4" fill="#b5d24a"/><text x="35" y="38.3">NiPc</text>
    <circle cx="32" cy="41.5" r="1.4" fill="#f08a2a"/><text x="35" y="42.8">FePc/OCNT</text>
    <circle cx="32" cy="46" r="1.4" fill="#b84ad8"/><text x="35" y="47.3">CoPc/OCNT</text>
    <circle cx="63" cy="32" r="1.4" fill="#f0a030"/><text x="66" y="33.3">FePc</text>
    <circle cx="63" cy="37" r="1.4" fill="#2a3ad8"/><text x="66" y="38.3">CuPc</text>
    <circle cx="63" cy="41.5" r="1.4" fill="#2a3ad8"/><text x="66" y="42.8">CuPc/OCNT</text>
    <circle cx="63" cy="46" r="1.4" fill="#e85a3a"/><text x="66" y="47.3">CoPc-OCNT</text>
    <circle cx="95" cy="32" r="1.4" fill="#c84ae0"/><text x="98" y="33.3">CoPc</text>
    <circle cx="95" cy="37" r="1.4" fill="#f0a0c8"/><text x="98" y="38.3">ZnPc</text>
    <circle cx="95" cy="46" r="1.4" fill="#3ab8c0"/><text x="98" y="47.3">CoN<tspan font-size="2.6">4</tspan></text>
  </g>
  <path d="M23 51.3H110" stroke="#888" stroke-width="0.5" stroke-dasharray="1.2 1"/>
  <path d="M24.6 106.2L66 51.8L106.2 106" fill="none" stroke="#333" stroke-width="0.6"/>
  <g>
    <circle cx="36.9" cy="89.5" r="1.7" fill="#f08a2a"/><circle cx="43.8" cy="80.5" r="1.7" fill="#e85a5a"/><circle cx="47.2" cy="77" r="1.7" fill="#222"/>
    <circle cx="54.9" cy="66.5" r="1.7" fill="#3ab8c0"/><circle cx="62.6" cy="57" r="1.7" fill="#b84ad8"/><circle cx="64.5" cy="55" r="1.5" fill="#f0a030"/>
    <circle cx="66.2" cy="53.5" r="1.9" fill="#e85a3a"/><circle cx="68.7" cy="57" r="1.7" fill="#e85a3a"/>
    <circle cx="96.5" cy="91.6" r="1.7" fill="#b5d24a"/><circle cx="99.6" cy="95.9" r="1.7" fill="#2a3ad8"/><circle cx="102.2" cy="98.9" r="1.7" fill="#2a3ad8"/>
  </g>
  <!-- panel c -->
  <text x="120" y="34" font-family="Liberation Sans" font-size="4.8" font-weight="700" fill="#111">c</text>
  <rect x="139" y="29" width="91.5" height="74" fill="none" stroke="#333" stroke-width="0.6"/>
  <g fill="#222" font-family="Liberation Sans" font-size="4">
    <text x="129" y="36">1.2</text><text x="129" y="50.5">0.8</text><text x="129" y="64">0.4</text><text x="129" y="78.8">0.0</text><text x="127.5" y="93.6">-0.4</text>
    <text transform="translate(124,85) rotate(-90)" font-size="4">Free energy (eV)</text>
    <text x="198" y="35">U = 0.70 V</text>
  </g>
  <g font-family="Liberation Sans" font-size="3.3" fill="#222">
    <text x="150" y="33">MnPc</text><text x="168" y="33">FePc</text><text x="183" y="33">CoPc</text>
    <text x="150" y="37.5">NiPc</text><text x="166" y="37.5">CuPc</text><text x="183" y="37.5">ZnPc</text>
    <text x="150" y="42">CoPc/OCNT</text><text x="177" y="42">CoPc-OCNT</text><text x="206" y="42">CoN4</text>
    <text x="141" y="100">*+O2+2(H⁺+e⁻)</text><text x="172" y="100">*OOH+H⁺+e⁻</text><text x="212" y="100">*+H2O2</text>
  </g>
  <path d="M139 78.5H230.5" stroke="#3ab8c0" stroke-width="0.8"/>
  <g fill="none" stroke-width="0.6" stroke-dasharray="1.2 0.8">
    <path d="M157 78.5L174 50L194 50L211 78" stroke="#b84ad8"/>
    <path d="M157 78.5L174 52L194 52L211 78" stroke="#e0a0a0"/>
    <path d="M157 78.5L173 91L196 91L211 78" stroke="#7a5ad0"/>
    <path d="M157 78.5L173 93L196 93L211 78" stroke="#e080c0"/>
  </g>
  <path d="M162 78.5H210" stroke="#e85a8a" stroke-width="0.7"/>
  <path d="M157 78.5L167 86H194L211 78" fill="none" stroke="#3ab8c0" stroke-width="0.8"/>
  <path d="M157 78.5L168 92H194L211 78" fill="none" stroke="#d06ad8" stroke-width="0.8"/>
  <path d="M155 35h6M155 39.5h6M155 44h6M172 44h6" stroke="#b84ad8" stroke-width="0.5" stroke-dasharray="1 0.6"/>
  <g fill="#222" font-family="Liberation Sans" font-size="4"><text x="28" y="111">-0.6</text><text x="50" y="111">-0.4</text><text x="90" y="111">-0.2</text></g>
</svg>
</div>
<div class="card" style="left:692px;top:478px;height:150px;border-color:transparent">
  <svg id="img6" class="a" style="left:0;top:9px" width="231" height="140" viewBox="0 0 231 140">
  <rect width="231" height="140" fill="#fff"/><circle cx="92.0" cy="12.0" r="0.7" fill="#3a6ad8"/><circle cx="94.1" cy="12.0" r="0.7" fill="#3a6ad8"/><circle cx="96.2" cy="12.0" r="0.7" fill="#3a6ad8"/><circle cx="98.3" cy="12.0" r="0.7" fill="#3a6ad8"/><circle cx="100.4" cy="12.0" r="0.7" fill="#3a6ad8"/><circle cx="102.5" cy="12.0" r="0.7" fill="#3a6ad8"/><circle cx="104.6" cy="12.0" r="0.7" fill="#3a6ad8"/><circle cx="106.7" cy="12.0" r="0.7" fill="#3a6ad8"/><circle cx="108.8" cy="12.0" r="0.7" fill="#3a6ad8"/><path d="M91 12.0h19" stroke="#9ab0e0" stroke-width="0.4"/><circle cx="92.0" cy="14.8" r="0.7" fill="#3a6ad8"/><circle cx="94.1" cy="14.8" r="0.7" fill="#3a6ad8"/><circle cx="96.2" cy="14.8" r="0.7" fill="#3a6ad8"/><circle cx="98.3" cy="14.8" r="0.7" fill="#3a6ad8"/><circle cx="100.4" cy="14.8" r="0.7" fill="#3a6ad8"/><circle cx="102.5" cy="14.8" r="0.7" fill="#3a6ad8"/><circle cx="104.6" cy="14.8" r="0.7" fill="#3a6ad8"/><circle cx="106.7" cy="14.8" r="0.7" fill="#3a6ad8"/><circle cx="108.8" cy="14.8" r="0.7" fill="#3a6ad8"/><path d="M91 14.8h19" stroke="#9ab0e0" stroke-width="0.4"/><circle cx="92.0" cy="17.6" r="0.7" fill="#3a6ad8"/><circle cx="94.1" cy="17.6" r="0.7" fill="#3a6ad8"/><circle cx="96.2" cy="17.6" r="0.7" fill="#3a6ad8"/><circle cx="98.3" cy="17.6" r="0.7" fill="#3a6ad8"/><circle cx="100.4" cy="17.6" r="0.7" fill="#3a6ad8"/><circle cx="102.5" cy="17.6" r="0.7" fill="#3a6ad8"/><circle cx="104.6" cy="17.6" r="0.7" fill="#3a6ad8"/><circle cx="106.7" cy="17.6" r="0.7" fill="#3a6ad8"/><circle cx="108.8" cy="17.6" r="0.7" fill="#3a6ad8"/><path d="M91 17.6h19" stroke="#9ab0e0" stroke-width="0.4"/><circle cx="92.0" cy="20.4" r="0.7" fill="#3a6ad8"/><circle cx="94.1" cy="20.4" r="0.7" fill="#3a6ad8"/><circle cx="96.2" cy="20.4" r="0.7" fill="#3a6ad8"/><circle cx="98.3" cy="20.4" r="0.7" fill="#3a6ad8"/><circle cx="100.4" cy="20.4" r="0.7" fill="#3a6ad8"/><circle cx="102.5" cy="20.4" r="0.7" fill="#3a6ad8"/><circle cx="104.6" cy="20.4" r="0.7" fill="#3a6ad8"/><circle cx="106.7" cy="20.4" r="0.7" fill="#3a6ad8"/><circle cx="108.8" cy="20.4" r="0.7" fill="#3a6ad8"/><path d="M91 20.4h19" stroke="#9ab0e0" stroke-width="0.4"/><path d="M110 12l2 1.5M110 15l2 1.5M110 18l2 1.5" stroke="#e8a03a" stroke-width="0.9"/><path d="M122 11h19l-4 11h-19z" fill="#3aa6d6"/><path d="M124.6 11l-4 11" stroke="#d8f0ff" stroke-width="0.45"/><path d="M127.2 11l-4 11" stroke="#d8f0ff" stroke-width="0.45"/><path d="M129.8 11l-4 11" stroke="#d8f0ff" stroke-width="0.45"/><path d="M132.4 11l-4 11" stroke="#d8f0ff" stroke-width="0.45"/><path d="M135.0 11l-4 11" stroke="#d8f0ff" stroke-width="0.45"/><path d="M137.6 11l-4 11" stroke="#d8f0ff" stroke-width="0.45"/><path d="M140.2 11l-4 11" stroke="#d8f0ff" stroke-width="0.45"/><path d="M121.1 13.6h19" stroke="#d8f0ff" stroke-width="0.45"/><path d="M120.1 16.2h19" stroke="#d8f0ff" stroke-width="0.45"/><path d="M119.2 18.8h19" stroke="#d8f0ff" stroke-width="0.45"/><path d="M118.2 21.4h19" stroke="#d8f0ff" stroke-width="0.45"/><path d="M154 11h21l-4 11h-21z" fill="#3aa6d6"/><path d="M156.6 11l-4 11" stroke="#d8f0ff" stroke-width="0.45"/><path d="M159.2 11l-4 11" stroke="#d8f0ff" stroke-width="0.45"/><path d="M161.8 11l-4 11" stroke="#d8f0ff" stroke-width="0.45"/><path d="M164.4 11l-4 11" stroke="#d8f0ff" stroke-width="0.45"/><path d="M167.0 11l-4 11" stroke="#d8f0ff" stroke-width="0.45"/><path d="M169.6 11l-4 11" stroke="#d8f0ff" stroke-width="0.45"/><path d="M172.2 11l-4 11" stroke="#d8f0ff" stroke-width="0.45"/><path d="M174.8 11l-4 11" stroke="#d8f0ff" stroke-width="0.45"/><path d="M153.1 13.6h21" stroke="#d8f0ff" stroke-width="0.45"/><path d="M152.1 16.2h21" stroke="#d8f0ff" stroke-width="0.45"/><path d="M151.2 18.8h21" stroke="#d8f0ff" stroke-width="0.45"/><path d="M150.2 21.4h21" stroke="#d8f0ff" stroke-width="0.45"/><path d="M184 11h23l-4 11h-23z" fill="#3aa6d6"/><path d="M186.6 11l-4 11" stroke="#d8f0ff" stroke-width="0.45"/><path d="M189.2 11l-4 11" stroke="#d8f0ff" stroke-width="0.45"/><path d="M191.8 11l-4 11" stroke="#d8f0ff" stroke-width="0.45"/><path d="M194.4 11l-4 11" stroke="#d8f0ff" stroke-width="0.45"/><path d="M197.0 11l-4 11" stroke="#d8f0ff" stroke-width="0.45"/><path d="M199.6 11l-4 11" stroke="#d8f0ff" stroke-width="0.45"/><path d="M202.2 11l-4 11" stroke="#d8f0ff" stroke-width="0.45"/><path d="M204.8 11l-4 11" stroke="#d8f0ff" stroke-width="0.45"/><path d="M183.1 13.6h23" stroke="#d8f0ff" stroke-width="0.45"/><path d="M182.1 16.2h23" stroke="#d8f0ff" stroke-width="0.45"/><path d="M181.2 18.8h23" stroke="#d8f0ff" stroke-width="0.45"/><path d="M180.2 21.4h23" stroke="#d8f0ff" stroke-width="0.45"/><path d="M112 16h4M141 16h6M173 16h5" stroke="#999" stroke-width="0.5"/>
  <rect x="212" y="13" width="3" height="1.3" fill="#3ab070"/><rect x="212" y="15.5" width="3" height="1.3" fill="#e04a6a"/>
  <rect x="216" y="13" width="10" height="1" fill="#888"/><rect x="216" y="15.5" width="10" height="1" fill="#888"/>
  <g fill="#333" font-family="Liberation Sans" font-size="3.2" font-weight="700">
    <text x="3.2" y="20.5">Solid phase polymerization (SPP)</text>
    <text x="20" y="50">Monomer crystal(s)</text>
    <text x="91" y="34">c</text><text x="93" y="38">Monomers</text><text x="163" y="38">Linkers</text><text x="207" y="38">Photo-initiator</text>
    <text x="3.2" y="68">d   (i) Extraction of single x-y plane</text>
    <text x="62" y="70">Possible polymer structure</text><text x="70" y="73.5">(single plane)</text>
    <text x="14.5" y="76.5">Monomer crystal 1-4</text>
    <text x="119" y="68">(ii) Layered x-y planes and 3D structure</text>
    <text x="123.4" y="78.3">Monomer crystal 1-4</text>
    <text x="187" y="70.5">Layered PPDA-CMP-1</text><text x="186" y="74">(top view of multi-planes)</text>
    <text x="92" y="27">Monomer crystal</text><text x="123" y="27">Polymer</text><text x="156" y="27">2D CMP</text><text x="183" y="27">Solid ice-structured 3D CMP</text>
  </g>
  <path d="M18.0 25V42" stroke="#7a8ab8" stroke-width="0.5"/><path d="M23.5 25V42" stroke="#7a8ab8" stroke-width="0.5"/><path d="M29.0 25V42" stroke="#7a8ab8" stroke-width="0.5"/><path d="M34.5 25V42" stroke="#7a8ab8" stroke-width="0.5"/><path d="M40.0 25V42" stroke="#7a8ab8" stroke-width="0.5"/><path d="M45.5 25V42" stroke="#7a8ab8" stroke-width="0.5"/><path d="M14 26H48" stroke="#7a8ab8" stroke-width="0.5"/><circle cx="18.0" cy="26" r="0.9" fill="#3a5ad8"/><circle cx="23.5" cy="26" r="0.9" fill="#3a5ad8"/><circle cx="29.0" cy="26" r="0.9" fill="#3a5ad8"/><circle cx="34.5" cy="26" r="0.9" fill="#3a5ad8"/><circle cx="40.0" cy="26" r="0.9" fill="#3a5ad8"/><circle cx="45.5" cy="26" r="0.9" fill="#3a5ad8"/><path d="M14 31H48" stroke="#7a8ab8" stroke-width="0.5"/><circle cx="18.0" cy="31" r="0.9" fill="#e8a03a"/><circle cx="23.5" cy="31" r="0.9" fill="#e8a03a"/><circle cx="29.0" cy="31" r="0.9" fill="#e8a03a"/><circle cx="34.5" cy="31" r="0.9" fill="#e8a03a"/><circle cx="40.0" cy="31" r="0.9" fill="#e8a03a"/><circle cx="45.5" cy="31" r="0.9" fill="#e8a03a"/><path d="M14 36H48" stroke="#7a8ab8" stroke-width="0.5"/><circle cx="18.0" cy="36" r="0.9" fill="#3a5ad8"/><circle cx="23.5" cy="36" r="0.9" fill="#3a5ad8"/><circle cx="29.0" cy="36" r="0.9" fill="#3a5ad8"/><circle cx="34.5" cy="36" r="0.9" fill="#3a5ad8"/><circle cx="40.0" cy="36" r="0.9" fill="#3a5ad8"/><circle cx="45.5" cy="36" r="0.9" fill="#3a5ad8"/><path d="M14 41H48" stroke="#7a8ab8" stroke-width="0.5"/><circle cx="18.0" cy="41" r="0.9" fill="#e8a03a"/><circle cx="23.5" cy="41" r="0.9" fill="#e8a03a"/><circle cx="29.0" cy="41" r="0.9" fill="#e8a03a"/><circle cx="34.5" cy="41" r="0.9" fill="#e8a03a"/><circle cx="40.0" cy="41" r="0.9" fill="#e8a03a"/><circle cx="45.5" cy="41" r="0.9" fill="#e8a03a"/>
  <g font-family="Liberation Sans" font-size="2.6" fill="#333"><text x="3" y="27" fill="#d04ac8">Initiator</text><text x="3" y="31" fill="#3a5ad8">Monomer</text><text x="3" y="35" fill="#e8a03a">Linker</text><text x="3" y="39">Halogen</text><text x="3" y="42">bonding</text></g>
  <path d="M50 34h6" stroke="#333" stroke-width="0.6"/>
  <g fill="none" stroke="#3a6ad8" stroke-width="1.6"><path d="M58 30q3-2 6 0t6 0 6 0 4 0M58 35q3-2 6 0t6 0 6 0 4 0M58 40q3-2 6 0t6 0 6 0 4 0"/></g>
  <text x="62" y="45" font-family="Liberation Sans" font-size="2.6" fill="#333">Polymerization</text>
  
  <g stroke="#8a6ad0" stroke-width="0.7"><path d="M39.8 100.2l5.4 1.0"/><path d="M15.0 83.2l3.7 -0.8"/><path d="M14.5 99.4l2.9 1.3"/><path d="M47.3 84.4l5.7 -0.4"/><path d="M15.3 85.7l2.2 -0.0"/><path d="M22.9 99.0l5.3 -1.8"/><path d="M23.7 89.8l2.7 -1.0"/><path d="M17.6 95.9l3.4 -1.6"/><path d="M15.7 90.8l4.3 -1.0"/><path d="M36.8 86.3l4.7 0.4"/><path d="M13.7 97.0l3.6 0.2"/><path d="M32.3 94.6l3.8 -1.8"/><path d="M40.6 99.2l4.0 0.3"/><path d="M17.8 100.0l4.7 -1.1"/><path d="M42.0 101.7l3.4 2.0"/><path d="M27.3 85.6l4.9 -0.6"/><path d="M38.2 93.7l2.4 0.1"/><path d="M43.4 91.6l4.2 1.5"/><path d="M25.7 91.9l4.3 1.3"/><path d="M14.9 83.9l5.0 0.2"/><path d="M19.3 99.8l5.5 0.2"/><path d="M49.5 98.7l5.0 -0.8"/><path d="M6.5 95.6l4.9 -0.6"/><path d="M27.1 93.3l3.0 0.8"/><path d="M30.8 89.7l2.4 0.2"/><path d="M20.1 96.5l2.7 -0.4"/><path d="M14.6 90.2l4.3 -1.6"/><path d="M8.4 91.6l2.8 0.0"/><path d="M13.4 84.0l4.2 1.7"/><path d="M44.2 92.3l3.6 -1.7"/></g>
  <g fill="#555" font-family="Liberation Sans" font-size="2.4"><text x="17.1" y="88.3">Iꟷ</text><text x="43.7" y="84.3">Iꟷ</text><text x="43.9" y="91.5">Iꟷ</text><text x="23.4" y="87.2">Iꟷ</text><text x="44.5" y="85.7">Iꟷ</text><text x="28.9" y="92.2">Iꟷ</text><text x="14.0" y="86.5">Iꟷ</text><text x="45.4" y="97.8">Iꟷ</text><text x="35.3" y="100.1">Iꟷ</text><text x="9.9" y="96.1">Iꟷ</text><text x="36.0" y="86.5">Iꟷ</text><text x="24.3" y="101.5">Iꟷ</text><text x="19.1" y="97.2">Iꟷ</text><text x="12.6" y="95.3">Iꟷ</text></g>
  <path d="M52 92h8" stroke="#333" stroke-width="0.7"/>
  <g font-family="Liberation Sans" font-size="2.4" fill="#333"><text x="52" y="96">SPP/</text><text x="51" y="99">photo-</text><text x="51" y="102">extrusion</text></g>
  
  <path d="M101.8 47.6 L99.0 49.2 L96.2 47.6 L96.2 44.4 L99.0 42.8 L101.8 44.4z" fill="none" stroke="#444" stroke-width="0.6"/><path d="M101.8 44.4l3 -2.5M99 49.2v2.5" stroke="#444" stroke-width="0.6"/><rect x="96" y="55" width="6" height="1" fill="#aaa"/><rect x="98.5" y="57" width="1" height="1" fill="#aaa"/><path d="M113.8 47.6 L111.0 49.2 L108.2 47.6 L108.2 44.4 L111.0 42.8 L113.8 44.4z" fill="none" stroke="#444" stroke-width="0.6"/><path d="M113.8 44.4l3 -2.5M111 49.2v2.5" stroke="#444" stroke-width="0.6"/><rect x="108" y="55" width="6" height="1" fill="#aaa"/><rect x="110.5" y="57" width="1" height="1" fill="#aaa"/><path d="M123.8 47.6 L121.0 49.2 L118.2 47.6 L118.2 44.4 L121.0 42.8 L123.8 44.4z" fill="none" stroke="#444" stroke-width="0.6"/><path d="M123.8 44.4l3 -2.5M121 49.2v2.5" stroke="#444" stroke-width="0.6"/><rect x="118" y="55" width="6" height="1" fill="#aaa"/><rect x="120.5" y="57" width="1" height="1" fill="#aaa"/><path d="M135.8 47.6 L133.0 49.2 L130.2 47.6 L130.2 44.4 L133.0 42.8 L135.8 44.4z" fill="none" stroke="#444" stroke-width="0.6"/><path d="M135.8 44.4l3 -2.5M133 49.2v2.5" stroke="#444" stroke-width="0.6"/><rect x="130" y="55" width="6" height="1" fill="#aaa"/><rect x="132.5" y="57" width="1" height="1" fill="#aaa"/><path d="M149.8 47.6 L147.0 49.2 L144.2 47.6 L144.2 44.4 L147.0 42.8 L149.8 44.4z" fill="none" stroke="#444" stroke-width="0.6"/><path d="M149.8 44.4l3 -2.5M147 49.2v2.5" stroke="#444" stroke-width="0.6"/><rect x="144" y="55" width="6" height="1" fill="#aaa"/><rect x="146.5" y="57" width="1" height="1" fill="#aaa"/><path d="M161.8 47.6 L159.0 49.2 L156.2 47.6 L156.2 44.4 L159.0 42.8 L161.8 44.4z" fill="none" stroke="#444" stroke-width="0.6"/><path d="M161.8 44.4l3 -2.5M159 49.2v2.5" stroke="#444" stroke-width="0.6"/><rect x="156" y="55" width="6" height="1" fill="#aaa"/><rect x="158.5" y="57" width="1" height="1" fill="#aaa"/><path d="M175.8 47.6 L173.0 49.2 L170.2 47.6 L170.2 44.4 L173.0 42.8 L175.8 44.4z" fill="none" stroke="#444" stroke-width="0.6"/><path d="M175.8 44.4l3 -2.5M173 49.2v2.5" stroke="#444" stroke-width="0.6"/><rect x="170" y="55" width="6" height="1" fill="#aaa"/><rect x="172.5" y="57" width="1" height="1" fill="#aaa"/><path d="M189.8 47.6 L187.0 49.2 L184.2 47.6 L184.2 44.4 L187.0 42.8 L189.8 44.4z" fill="none" stroke="#444" stroke-width="0.6"/><path d="M189.8 44.4l3 -2.5M187 49.2v2.5" stroke="#444" stroke-width="0.6"/><rect x="184" y="55" width="6" height="1" fill="#aaa"/><rect x="186.5" y="57" width="1" height="1" fill="#aaa"/><path d="M203.8 47.6 L201.0 49.2 L198.2 47.6 L198.2 44.4 L201.0 42.8 L203.8 44.4z" fill="none" stroke="#444" stroke-width="0.6"/><path d="M203.8 44.4l3 -2.5M201 49.2v2.5" stroke="#444" stroke-width="0.6"/><rect x="198" y="55" width="6" height="1" fill="#aaa"/><rect x="200.5" y="57" width="1" height="1" fill="#aaa"/><path d="M219.8 47.6 L217.0 49.2 L214.2 47.6 L214.2 44.4 L217.0 42.8 L219.8 44.4z" fill="none" stroke="#444" stroke-width="0.6"/><path d="M219.8 44.4l3 -2.5M217 49.2v2.5" stroke="#444" stroke-width="0.6"/><rect x="214" y="55" width="6" height="1" fill="#aaa"/><rect x="216.5" y="57" width="1" height="1" fill="#aaa"/><path d="M99 78v30" stroke="#888" stroke-width="0.4"/>
  <path d="M114 112L122 96L132 100L124 112z" fill="#f4c0e0"/>
  <path d="M122 112L132 92L142 88L136 112z" fill="#bcd8f0"/>
  <path d="M142 108L150 84L162 78L154 104z" fill="#f0e850"/>
  <g stroke="#444" stroke-width="0.7" fill="none"><path d="M118.0 108.0l3 -1.6M121.0 106.4l1.2 0.6" /><path d="M120.6 103.8l3 -1.6M123.6 102.2l1.2 0.6" /><path d="M123.2 99.6l3 -1.6M126.2 98.0l1.2 0.6" /><path d="M125.8 95.4l3 -1.6M128.8 93.8l1.2 0.6" /><path d="M128.4 91.2l3 -1.6M131.4 89.6l1.2 0.6" /><path d="M131.0 87.0l3 -1.6M134.0 85.4l1.2 0.6" /><path d="M130.0 104.0l3 -1.6M133.0 102.4l1.2 0.6" /><path d="M132.6 99.8l3 -1.6M135.6 98.2l1.2 0.6" /><path d="M135.2 95.6l3 -1.6M138.2 94.0l1.2 0.6" /><path d="M137.8 91.4l3 -1.6M140.8 89.8l1.2 0.6" /><path d="M140.4 87.2l3 -1.6M143.4 85.6l1.2 0.6" /><path d="M143.0 83.0l3 -1.6M146.0 81.4l1.2 0.6" /><path d="M146.0 100.0l3 -1.6M149.0 98.4l1.2 0.6" /><path d="M148.6 95.8l3 -1.6M151.6 94.2l1.2 0.6" /><path d="M151.2 91.6l3 -1.6M154.2 90.0l1.2 0.6" /><path d="M153.8 87.4l3 -1.6M156.8 85.8l1.2 0.6" /><path d="M156.4 83.2l3 -1.6M159.4 81.6l1.2 0.6" /><path d="M159.0 79.0l3 -1.6M162.0 77.4l1.2 0.6" /></g>
  <path d="M160 92h9" stroke="#333" stroke-width="0.7"/>
  <g font-family="Liberation Sans" font-size="2.4" fill="#333"><text x="160" y="96">SPP/</text><text x="159" y="99">photo-</text><text x="159" y="102">extrusion</text></g>
  
<path d="M72.8 83.6 L70.0 85.2 L67.2 83.6 L67.2 80.4 L70.0 78.8 L72.8 80.4z" fill="none" stroke="#444" stroke-width="0.55"/><path d="M70 78.8l-1 -3M72.8 83.6l3 1" stroke="#444" stroke-width="0.55"/><path d="M82.8 81.6 L80.0 83.2 L77.2 81.6 L77.2 78.4 L80.0 76.8 L82.8 78.4z" fill="none" stroke="#444" stroke-width="0.55"/><path d="M80 76.8l-1 -3M82.8 81.6l3 1" stroke="#444" stroke-width="0.55"/><path d="M92.8 85.6 L90.0 87.2 L87.2 85.6 L87.2 82.4 L90.0 80.8 L92.8 82.4z" fill="none" stroke="#444" stroke-width="0.55"/><path d="M90 80.8l-1 -3M92.8 85.6l3 1" stroke="#444" stroke-width="0.55"/><path d="M76.8 93.6 L74.0 95.2 L71.2 93.6 L71.2 90.4 L74.0 88.8 L76.8 90.4z" fill="none" stroke="#444" stroke-width="0.55"/><path d="M74 88.8l-1 -3M76.8 93.6l3 1" stroke="#444" stroke-width="0.55"/><path d="M88.8 95.6 L86.0 97.2 L83.2 95.6 L83.2 92.4 L86.0 90.8 L88.8 92.4z" fill="none" stroke="#444" stroke-width="0.55"/><path d="M86 90.8l-1 -3M88.8 95.6l3 1" stroke="#444" stroke-width="0.55"/><path d="M98.8 93.6 L96.0 95.2 L93.2 93.6 L93.2 90.4 L96.0 88.8 L98.8 90.4z" fill="none" stroke="#444" stroke-width="0.55"/><path d="M96 88.8l-1 -3M98.8 93.6l3 1" stroke="#444" stroke-width="0.55"/><path d="M72.8 104.6 L70.0 106.2 L67.2 104.6 L67.2 101.4 L70.0 99.8 L72.8 101.4z" fill="none" stroke="#444" stroke-width="0.55"/><path d="M70 99.8l-1 -3M72.8 104.6l3 1" stroke="#444" stroke-width="0.55"/><path d="M84.8 105.6 L82.0 107.2 L79.2 105.6 L79.2 102.4 L82.0 100.8 L84.8 102.4z" fill="none" stroke="#444" stroke-width="0.55"/><path d="M82 100.8l-1 -3M84.8 105.6l3 1" stroke="#444" stroke-width="0.55"/><path d="M95.8 105.6 L93.0 107.2 L90.2 105.6 L90.2 102.4 L93.0 100.8 L95.8 102.4z" fill="none" stroke="#444" stroke-width="0.55"/><path d="M93 100.8l-1 -3M95.8 105.6l3 1" stroke="#444" stroke-width="0.55"/><path d="M79.8 114.6 L77.0 116.2 L74.2 114.6 L74.2 111.4 L77.0 109.8 L79.8 111.4z" fill="none" stroke="#444" stroke-width="0.55"/><path d="M77 109.8l-1 -3M79.8 114.6l3 1" stroke="#444" stroke-width="0.55"/><path d="M195.4 84.3 L192.8 85.8 L190.2 84.3 L190.2 81.3 L192.8 79.8 L195.4 81.3z" fill="none" stroke="#5a8ad8" stroke-width="0.55"/><path d="M192.8 79.8l-1.7 -3M195.4 84.3l3 1.5" stroke="#5a8ad8" stroke-width="0.55"/><path d="M206.5 91.2 L203.9 92.7 L201.3 91.2 L201.3 88.2 L203.9 86.7 L206.5 88.2z" fill="none" stroke="#e8a050" stroke-width="0.55"/><path d="M203.9 86.7l-1.8 -3M206.5 91.2l3 1.5" stroke="#e8a050" stroke-width="0.55"/><path d="M205.0 80.7 L202.4 82.2 L199.8 80.7 L199.8 77.7 L202.4 76.2 L205.0 77.7z" fill="none" stroke="#e8a050" stroke-width="0.55"/><path d="M202.4 76.2l-0.3 -3M205.0 80.7l3 1.5" stroke="#e8a050" stroke-width="0.55"/><path d="M182.2 82.4 L179.6 83.9 L177.0 82.4 L177.0 79.4 L179.6 77.9 L182.2 79.4z" fill="none" stroke="#e8a050" stroke-width="0.55"/><path d="M179.6 77.9l-1.8 -3M182.2 82.4l3 1.5" stroke="#e8a050" stroke-width="0.55"/><path d="M208.0 109.8 L205.4 111.3 L202.8 109.8 L202.8 106.8 L205.4 105.3 L208.0 106.8z" fill="none" stroke="#e8a050" stroke-width="0.55"/><path d="M205.4 105.3l0.5 -3M208.0 109.8l3 1.5" stroke="#e8a050" stroke-width="0.55"/><path d="M208.9 81.5 L206.3 83.0 L203.7 81.5 L203.7 78.5 L206.3 77.0 L208.9 78.5z" fill="none" stroke="#e8a050" stroke-width="0.55"/><path d="M206.3 77.0l0.3 -3M208.9 81.5l3 1.5" stroke="#e8a050" stroke-width="0.55"/><path d="M181.2 86.6 L178.6 88.1 L176.0 86.6 L176.0 83.6 L178.6 82.1 L181.2 83.6z" fill="none" stroke="#d860c8" stroke-width="0.55"/><path d="M178.6 82.1l-0.8 -3M181.2 86.6l3 1.5" stroke="#d860c8" stroke-width="0.55"/><path d="M186.1 83.3 L183.5 84.8 L180.9 83.3 L180.9 80.3 L183.5 78.8 L186.1 80.3z" fill="none" stroke="#5a8ad8" stroke-width="0.55"/><path d="M183.5 78.8l0.2 -3M186.1 83.3l3 1.5" stroke="#5a8ad8" stroke-width="0.55"/><path d="M214.1 82.8 L211.5 84.3 L208.9 82.8 L208.9 79.8 L211.5 78.3 L214.1 79.8z" fill="none" stroke="#e8a050" stroke-width="0.55"/><path d="M211.5 78.3l0.3 -3M214.1 82.8l3 1.5" stroke="#e8a050" stroke-width="0.55"/><path d="M188.4 82.6 L185.8 84.1 L183.2 82.6 L183.2 79.6 L185.8 78.1 L188.4 79.6z" fill="none" stroke="#5a8ad8" stroke-width="0.55"/><path d="M185.8 78.1l0.3 -3M188.4 82.6l3 1.5" stroke="#5a8ad8" stroke-width="0.55"/><path d="M210.8 95.4 L208.2 96.9 L205.6 95.4 L205.6 92.4 L208.2 90.9 L210.8 92.4z" fill="none" stroke="#e8a050" stroke-width="0.55"/><path d="M208.2 90.9l0.1 -3M210.8 95.4l3 1.5" stroke="#e8a050" stroke-width="0.55"/><path d="M219.0 94.4 L216.4 95.9 L213.8 94.4 L213.8 91.4 L216.4 89.9 L219.0 91.4z" fill="none" stroke="#e8a050" stroke-width="0.55"/><path d="M216.4 89.9l1.7 -3M219.0 94.4l3 1.5" stroke="#e8a050" stroke-width="0.55"/><path d="M197.4 87.4 L194.8 88.9 L192.2 87.4 L192.2 84.4 L194.8 82.9 L197.4 84.4z" fill="none" stroke="#d860c8" stroke-width="0.55"/><path d="M194.8 82.9l0.8 -3M197.4 87.4l3 1.5" stroke="#d860c8" stroke-width="0.55"/><path d="M191.3 97.9 L188.7 99.4 L186.1 97.9 L186.1 94.9 L188.7 93.4 L191.3 94.9z" fill="none" stroke="#e8a050" stroke-width="0.55"/><path d="M188.7 93.4l1.5 -3M191.3 97.9l3 1.5" stroke="#e8a050" stroke-width="0.55"/><path d="M216.5 88.7 L213.9 90.2 L211.3 88.7 L211.3 85.7 L213.9 84.2 L216.5 85.7z" fill="none" stroke="#e8a050" stroke-width="0.55"/><path d="M213.9 84.2l1.9 -3M216.5 88.7l3 1.5" stroke="#e8a050" stroke-width="0.55"/><path d="M184.7 92.9 L182.1 94.4 L179.5 92.9 L179.5 89.9 L182.1 88.4 L184.7 89.9z" fill="none" stroke="#5a8ad8" stroke-width="0.55"/><path d="M182.1 88.4l-1.4 -3M184.7 92.9l3 1.5" stroke="#5a8ad8" stroke-width="0.55"/><path d="M204.0 80.8 L201.4 82.3 L198.8 80.8 L198.8 77.8 L201.4 76.3 L204.0 77.8z" fill="none" stroke="#e8a050" stroke-width="0.55"/><path d="M201.4 76.3l0.7 -3M204.0 80.8l3 1.5" stroke="#e8a050" stroke-width="0.55"/><path d="M218.4 97.8 L215.8 99.3 L213.2 97.8 L213.2 94.8 L215.8 93.3 L218.4 94.8z" fill="none" stroke="#e8a050" stroke-width="0.55"/><path d="M215.8 93.3l1.5 -3M218.4 97.8l3 1.5" stroke="#e8a050" stroke-width="0.55"/><path d="M194.9 101.7 L192.3 103.2 L189.7 101.7 L189.7 98.7 L192.3 97.2 L194.9 98.7z" fill="none" stroke="#e8a050" stroke-width="0.55"/><path d="M192.3 97.2l0.3 -3M194.9 101.7l3 1.5" stroke="#e8a050" stroke-width="0.55"/><path d="M202.3 106.4 L199.7 107.9 L197.1 106.4 L197.1 103.4 L199.7 101.9 L202.3 103.4z" fill="none" stroke="#5a8ad8" stroke-width="0.55"/><path d="M199.7 101.9l-0.1 -3M202.3 106.4l3 1.5" stroke="#5a8ad8" stroke-width="0.55"/><path d="M213.1 81.4 L210.5 82.9 L207.9 81.4 L207.9 78.4 L210.5 76.9 L213.1 78.4z" fill="none" stroke="#e8a050" stroke-width="0.55"/><path d="M210.5 76.9l0.8 -3M213.1 81.4l3 1.5" stroke="#e8a050" stroke-width="0.55"/><path d="M212.2 111.3 L209.7 112.8 L207.1 111.3 L207.1 108.3 L209.7 106.8 L212.2 108.3z" fill="none" stroke="#e8a050" stroke-width="0.55"/><path d="M209.7 106.8l1.3 -3M212.3 111.3l3 1.5" stroke="#e8a050" stroke-width="0.55"/></svg>
</div>
<!-- ad panel text -->
<div class="a" style="left:994px;top:93px;font-size:9.3px;line-height:14px;color:#7a7f88">广告:</div>
<div class="a" style="left:985px;top:552px;font-size:9.7px;line-height:14px;color:#7a7f88;text-decoration:underline">移除广告</div>

<div class="a" style="left:0;top:51px;width:1080px;height:3px;background:linear-gradient(rgba(0,0,0,0.13),rgba(0,0,0,0))"></div>
<div class="a" style="left:195px;top:51px;width:1px;height:545px;background:#d3ddec"></div>
<!-- right ad panel -->
<div class="a" style="left:938px;top:86px;width:1px;height:510px;background:#eceef1"></div>
<div class="a" style="left:1070px;top:86px;width:1px;height:510px;background:#eceef1"></div>
<div class="a" style="left:947px;top:113px;width:117px;height:435px;border:1px solid #ebedef"></div>
<div class="a" style="left:1073px;top:88px;width:5px;height:107px;border-radius:3px;background:#c0c4cb"></div>

<!-- bottom bar -->
<div class="a" style="left:0;top:596px;width:1080px;height:21px;background:#1c355b"></div>
<div class="a" style="left:201px;top:600px;width:103px;height:3px;background:#fff;border-radius:2px 2px 0 0"></div>
<div class="a" style="left:349px;top:599px;font-size:10.6px;line-height:16px;color:#e6ebf2;white-space:nowrap">标记为已读</div>
<svg class="a" style="left:1065px;top:602.5px" width="9" height="9" viewBox="0 0 9 9"><path d="M1 1l7 7M8 1L1 8" stroke="#b9c3d3" stroke-width="1.3"/></svg>
<div class="a" style="left:0;top:601.5px;width:358px;height:15.5px;background:#d7ae47"></div>
<div class="a" style="left:4px;top:602.5px;font-size:8.5px;line-height:14px;color:#2e2716;white-space:nowrap">正在等待 www.inoreader.com...</div>
</body></html>
